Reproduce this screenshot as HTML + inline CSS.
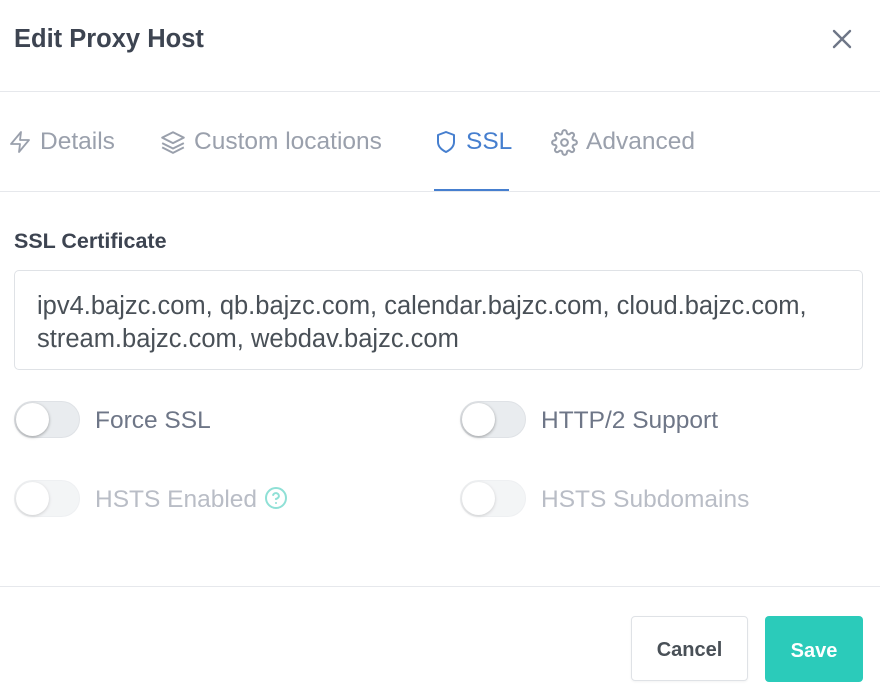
<!DOCTYPE html>
<html><head><style>
body{margin:0;width:880px;height:693px;background:#fff;font-family:"Liberation Sans",sans-serif;position:relative;overflow:hidden;color:#495057}
.a{position:absolute}
.hr{position:absolute;left:0;width:880px;height:1px;background:#e6e8ec}
.tab{position:absolute;top:128px;font-size:24.5px;color:#9aa0ac;display:flex;align-items:center;gap:8px;white-space:nowrap}
.tg{position:absolute;width:64px;height:35px;border:1px solid #dfe2e6;border-radius:19px;background:#e9ecef}
.tg::after{content:"";position:absolute;left:1px;top:1px;width:33px;height:33px;border-radius:50%;background:#fff;box-shadow:0 1px 3px rgba(0,0,0,.35)}
.tg.d{opacity:.5}
.lb{position:absolute;font-size:24.5px;color:#6e7687;white-space:nowrap}
.lb.d{color:#b9bdc6}
</style></head><body>
<div class="a" style="left:14px;top:25px;font-size:25.5px;font-weight:bold;color:#3d4451">Edit Proxy Host</div>
<svg class="a" style="left:831px;top:28px" width="22" height="22" viewBox="0 0 22 22"><path d="M3 3L19 19M19 3L3 19" stroke="#6e7687" stroke-width="2.4" stroke-linecap="round"/></svg>
<div class="hr" style="top:91px"></div>
<div class="tab" style="left:8px"><svg width="24" height="26" viewBox="0 0 24 24" fill="none" stroke="#9aa0ac" stroke-width="1.8" stroke-linejoin="round"><path d="M13 2L3 14h9l-1 8 10-12h-9l1-8z"/></svg>Details</div>
<div class="tab" style="left:160px"><svg width="26" height="26" viewBox="0 0 24 24" fill="none" stroke="#9aa0ac" stroke-width="1.8" stroke-linejoin="round"><path d="M12 3L2 8l10 5 10-5-10-5zM2 13l10 5 10-5M2 17l10 5 10-5"/></svg>Custom locations</div>
<div class="tab" style="left:434px;color:#467fcf"><svg width="24" height="26" viewBox="0 0 24 24" fill="none" stroke="#467fcf" stroke-width="2" stroke-linejoin="round"><path d="M12 2l8 3v7c0 5-4 8-8 10-4-2-8-5-8-10V5l8-3z"/></svg>SSL</div>
<div class="tab" style="left:551px"><svg width="27" height="27" viewBox="0 0 24 24" fill="none" stroke="#9aa0ac" stroke-width="1.8"><circle cx="12" cy="12" r="3"/><path d="M19.4 15a1.7 1.7 0 0 0 .3 1.8l.1.1a2 2 0 1 1-2.8 2.8l-.1-.1a1.7 1.7 0 0 0-1.8-.3 1.7 1.7 0 0 0-1 1.5V21a2 2 0 1 1-4 0v-.1a1.7 1.7 0 0 0-1.1-1.5 1.7 1.7 0 0 0-1.8.3l-.1.1a2 2 0 1 1-2.8-2.8l.1-.1a1.7 1.7 0 0 0 .3-1.8 1.7 1.7 0 0 0-1.5-1H3a2 2 0 1 1 0-4h.1a1.7 1.7 0 0 0 1.5-1.1 1.7 1.7 0 0 0-.3-1.8l-.1-.1a2 2 0 1 1 2.8-2.8l.1.1a1.7 1.7 0 0 0 1.8.3H9a1.7 1.7 0 0 0 1-1.5V3a2 2 0 1 1 4 0v.1a1.7 1.7 0 0 0 1 1.5 1.7 1.7 0 0 0 1.8-.3l.1-.1a2 2 0 1 1 2.8 2.8l-.1.1a1.7 1.7 0 0 0-.3 1.8V9a1.7 1.7 0 0 0 1.5 1H21a2 2 0 1 1 0 4h-.1a1.7 1.7 0 0 0-1.5 1z"/></svg>Advanced</div>
<div class="a" style="left:434px;top:189px;width:75px;height:2px;background:#467fcf"></div>
<div class="hr" style="top:191px"></div>
<div class="a" style="left:14px;top:229px;font-size:21.5px;font-weight:bold;color:#3d4451">SSL Certificate</div>
<div class="a" style="left:14px;top:270px;width:847px;height:98px;border:1px solid #dfe2e6;border-radius:5px"></div>
<div class="a" style="left:37px;top:290px;font-size:25.5px;line-height:33px;color:#495057;white-space:nowrap">ipv4.bajzc.com, qb.bajzc.com, calendar.bajzc.com, cloud.bajzc.com,<br>stream.bajzc.com, webdav.bajzc.com</div>
<div class="tg" style="left:14px;top:401px"></div><div class="lb" style="left:95px;top:407px">Force SSL</div>
<div class="tg" style="left:460px;top:401px"></div><div class="lb" style="left:541px;top:407px">HTTP/2 Support</div>
<div class="tg d" style="left:14px;top:480px"></div><div class="lb d" style="left:95px;top:486px">HSTS Enabled <svg style="vertical-align:-3px" width="24" height="24" viewBox="0 0 24 24" fill="none" stroke="#8fe0d6" stroke-width="2" stroke-linecap="round"><circle cx="12" cy="12" r="10"/><path d="M9.1 9a3 3 0 0 1 5.8 1c0 2-3 3-3 3M12 17h.01"/></svg></div>
<div class="tg d" style="left:460px;top:480px"></div><div class="lb d" style="left:541px;top:486px">HSTS Subdomains</div>
<div class="hr" style="top:586px"></div>
<div class="a" style="left:631px;top:616px;width:117px;height:65px;border:1px solid #dfe2e6;border-radius:4px;box-sizing:border-box;display:flex;align-items:center;justify-content:center;font-size:20px;font-weight:bold;color:#495057;padding-top:4px;box-shadow:0 1px 2px rgba(0,0,0,.05)">Cancel</div>
<div class="a" style="left:765px;top:616px;width:98px;height:66px;border-radius:4px;background:#2bcbba;display:flex;align-items:center;justify-content:center;font-size:20px;font-weight:bold;color:#fff;box-sizing:border-box;padding-top:4px">Save</div>
</body></html>
